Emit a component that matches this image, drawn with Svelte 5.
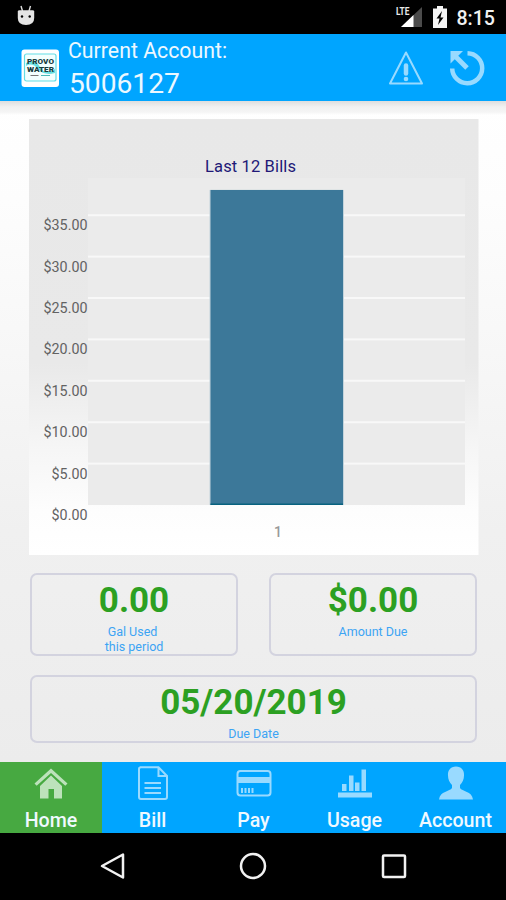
<script>
  const account = '5006127'

  // chart geometry, in panel coordinates
  const plot = { left: 59, right: 436, top: 59, bottom: 386 }
  const step = 41.4
  const ticks = [0, 5, 10, 15, 20, 25, 30, 35]
  const bills = [{ label: '1', x: 181.5, amount: 38.05 }]

  const barHeight = amount => (amount / 5) * step

  let active = 'Home'
  const tabs = ['Home', 'Bill', 'Pay', 'Usage', 'Account']
</script>

<div class="screen">
  <div class="status">
    <svg class="droid" width="18" height="21" viewBox="0 0 18 21">
      <path d="M4 1l1.5 5M13.5 1L12 6" stroke="#ddd" stroke-width="1.4" />
      <path d="M.8 6.5Q.8 5.2 2.5 5.2H15.500q1.700 0 1.700 1.300V13q0 7-8.200 7T.8 13z" fill="#e4e4e4" />
      <circle cx="5" cy="11.500" r="1.200" />
      <circle cx="12.700" cy="11.500" r="1.200" />
    </svg>
    <svg class="signal" width="28" height="28" viewBox="0 -3 28 28">
      <path d="M27 1v20H6z" fill="#4b4b4b" />
      <path d="M18.500 9V21H6z" fill="#fff" />
      <path d="M0 0h15v10.500H0z" fill="#000" />
      <text x="1" y="9" textLength="13.500" lengthAdjust="spacingAndGlyphs">LTE</text>
    </svg>
    <svg class="battery" width="14" height="22" viewBox="0 0 14 22">
      <path d="M4 0h6v2.500h4V22H0V2.500h4z" fill="#f4f4f4" />
      <path d="M9 5L3.500 12.500h3L5 19l5.500-7.500h-3z" fill="#000" />
    </svg>
    <span class="clock">8:15</span>
  </div>

  <header>
    <svg class="logo" width="38" height="38" viewBox="0 0 38 38">
      <rect x="0.500" y="0.500" width="37.500" height="37.500" rx="3" fill="#fff" />
      <rect x="3.500" y="5" width="31.500" height="27" rx="2" fill="#f3fffe" stroke="#62dde5" stroke-width="1.200" />
      <path d="M5 14q9-5 14 4t15 2v4q-11 3-17-4T5 17z" fill="#65dfe2" />
      <text x="6" y="14.500" textLength="27" lengthAdjust="spacingAndGlyphs">PROVO</text>
      <text x="6" y="22.800" textLength="27" lengthAdjust="spacingAndGlyphs">WATER</text>
      <path d="M9.500 26.500h8" stroke="#777" />
      <path d="M20 26.500h9" stroke="#49b9b8" />
    </svg>
    <div class="account">
      <span class="caption">Current Account:</span>
      <span class="number">{account}</span>
    </div>
    <svg class="alert" width="36" height="36" viewBox="0 0 36 36" fill="none" stroke="#99daff">
      <path d="M18 2.500L34 33.500H2z" stroke-width="2" stroke-linejoin="round" />
      <path d="M18 15.500v8" stroke-width="4.500" stroke-linecap="round" />
      <circle cx="18" cy="29" r="2.300" fill="#99daff" stroke="none" />
    </svg>
    <svg class="refresh" width="36" height="36" viewBox="0 0 36 36" fill="none" stroke="#99daff" stroke-width="4.500">
      <path d="M18.500 3.200A15 15 0 1 1 3.200 18.500" />
      <path d="M7 7L18 18" stroke-width="5" />
      <path d="M1.500 1H14L1.500 13.500z" fill="#99daff" stroke="none" />
    </svg>
  </header>

  <main>
    <svg class="chart" width="450" height="436" viewBox="0 0 450 436">
      <defs>
        <linearGradient id="panel" x1="0" y1="0" x2="0" y2="1">
          <stop offset="0" stop-color="#e8e8e8" />
          <stop offset="0.560" stop-color="#e9e9e9" />
          <stop offset="0.760" stop-color="#f6f6f6" />
          <stop offset="0.900" stop-color="#fdfdfd" />
          <stop offset="1" stop-color="#fff" />
        </linearGradient>
      </defs>
      <rect width="449.500" height="436" fill="url(#panel)" />
      <rect x={plot.left} y={plot.top} width={plot.right - plot.left} height={plot.bottom - plot.top} fill="#ebebeb" />
      <text class="title" x="221.500" y="53" textLength="91">Last 12 Bills</text>

      {#each ticks as tick, i}
        {#if i > 0}
          <rect x={plot.left} y={plot.bottom - i * step - 1} width={plot.right - plot.left} height="2" fill="#f8f8f8" />
        {/if}
        <text class="tick" x="58.500" y={plot.bottom - i * step + 15}>${tick}.00</text>
      {/each}

      {#each bills as bill}
        <rect x={bill.x - 1} y={plot.bottom - barHeight(bill.amount)} width="134.500" height={barHeight(bill.amount)} fill="#c4d4dc" />
        <rect x={bill.x} y={plot.bottom - barHeight(bill.amount)} width="132.500" height={barHeight(bill.amount)} fill="#3c7899" />
        <rect x={bill.x} y={plot.bottom - 1.5} width="132.500" height="1.500" fill="#08627f" />
        <text class="bill" x="249" y="418">{bill.label}</text>
      {/each}
    </svg>

    <div class="cards">
      <div class="card">
        <strong>0.00</strong>
        <span class="used">Gal Used<br />&nbsp;this period</span>
      </div>
      <div class="card">
        <strong>$0.00</strong>
        <span>Amount Due</span>
      </div>
      <div class="card wide">
        <strong>05/20/2019</strong>
        <span>Due Date</span>
      </div>
    </div>
  </main>

  <nav class="tabs">
    {#each tabs as tab}
      <button class:active={tab === active} on:click={() => (active = tab)}>
        <svg width="36" height="36" viewBox="0 0 36 36">
          {#if tab === 'Home'}
            <path d="M18 2.500L34.500 17.500l-2.200 2.200L18 7 3.700 19.700 1.500 17.500z" />
            <path d="M18 9.500L29 20v12.500H21V23h-5.500v9.500H7V20z" />
          {:else if tab === 'Bill'}
            <path class="line" d="M5 1.200h18.500L32 10v21q0 2-2 2H6q-2 0-2-2V3q0-1.800 2-1.800zM23.500 1.200V10H32" />
            <path class="line" d="M9.500 17h16.500M9.500 22h16.500M9.500 27h16.500" />
          {:else if tab === 'Pay'}
            <rect class="line" x="1.500" y="5" width="33" height="24.500" rx="3" />
            <path d="M1.500 11h33v6h-33z" />
            <path d="M5 22h2v5H5zM8.500 22h2v5h-2zM12 22h2v5h-2zM15.500 22h2v5h-2z" />
          {:else if tab === 'Usage'}
            <path d="M5 18h4.500V25H5zM12 9.500h4.500V25H12zM18 16.500h4.500V25H18zM24.500 3.500H29V25H24.500zM1 26.500h34v5H1z" />
          {:else}
            <path d="M18 .5c5.500 0 8.500 4 8 9 0 4-1.500 7-4 9.500v3c2 3.500 12 3 13 11.500H1C2 25 12 25.500 14 22v-3c-2.500-2.500-4-5.500-4-9.500-.5-5 2.500-9 8-9z" />
          {/if}
        </svg>
        <span>{tab}</span>
      </button>
    {/each}
  </nav>

  <div class="system">
    <svg width="28" height="30" viewBox="0 0 28 30"><path d="M24 3.500v23L3 15z" /></svg>
    <svg width="28" height="30" viewBox="0 0 28 30"><circle cx="14" cy="15" r="12" /></svg>
    <svg width="28" height="30" viewBox="0 0 28 30"><rect x="3" y="4.500" width="22" height="21.500" rx="1" /></svg>
  </div>
</div>

<style>
  :global(body) {
    margin: 0;
  }

  .screen {
    display: flex;
    flex-direction: column;
    width: 506px;
    height: 900px;
    overflow: hidden;
    font-family: Roboto, sans-serif;
    background: #000;
  }

  svg {
    display: block;
    flex: none;
  }

  .status {
    display: flex;
    align-items: center;
    box-sizing: border-box;
    height: 34px;
    padding: 0 11px 0 17px;
    color: #f1f1f1;
  }

  .droid {
    margin: 0 auto 3px 0;
  }

  .signal {
    margin-right: 10px;
  }

  .signal text {
    font-size: 10.5px;
    font-weight: 700;
    fill: #e8e8e8;
  }

  .battery {
    margin-right: 9px;
  }

  .clock {
    margin-top: 3px;
    font-size: 19.6px;
    line-height: 24px;
    font-weight: 500;
  }

  header {
    display: flex;
    align-items: center;
    box-sizing: border-box;
    height: 67px;
    padding: 0 21px 0 21px;
    background: #00a5ff;
    color: #ecf8ff;
  }

  .logo text {
    font-size: 7px;
    font-weight: 900;
    fill: #173c3d;
  }

  .account {
    display: flex;
    flex-direction: column;
    margin: 0 auto 0 9px;
  }

  .caption {
    font-size: 21.3px;
    line-height: 31px;
  }

  .number {
    padding-left: 1px;
    font-size: 28.2px;
    line-height: 35px;
  }

  .alert {
    margin-right: 25px;
  }

  main {
    box-sizing: border-box;
    height: 661px;
    padding: 18px 28px 0 29px;
    background:
      linear-gradient(#dedede, #f1f1f1 6px, #f5f5f5 11px, transparent 14px) no-repeat 0 0 / 100% 14px,
      linear-gradient(#fff, #fdfdfd 15%, #f0f0f0 65%, #ececec);
  }

  .title {
    font-size: 16.5px;
    text-anchor: middle;
    fill: #211877;
  }

  .tick {
    font-size: 14.3px;
    text-anchor: end;
    fill: #626262;
  }

  .bill {
    font-size: 14px;
    font-weight: 500;
    text-anchor: middle;
    fill: #999;
  }

  .cards {
    display: grid;
    grid-template-columns: 208px 208px;
    grid-template-rows: 83px 68px;
    gap: 19px 31px;
    margin: 18px 0 0 1px;
  }

  .card {
    display: flex;
    flex-direction: column;
    align-items: center;
    box-sizing: border-box;
    border: 2px solid #d3d3df;
    border-radius: 7px;
    text-align: center;
    color: #3ca4f4;
    font-size: 12.5px;
    line-height: 15px;
  }

  .card strong {
    margin-top: 2px;
    font-size: 35px;
    line-height: 47px;
    font-weight: 700;
    color: #2ca022;
  }

  .used {
    margin-right: 3px;
  }

  .wide {
    grid-column: 1 / 3;
  }

  .tabs {
    display: grid;
    grid-template-columns: 102px repeat(4, 101px);
    height: 71px;
  }

  .tabs button {
    display: flex;
    flex-direction: column;
    align-items: center;
    margin: 0;
    padding: 4px 0 0;
    border: 0;
    background: #00a5ff;
    color: #f0f9ff;
    font: 500 19.6px/24px Roboto, sans-serif;
  }

  .tabs button.active {
    background: #47a941;
  }

  .tabs span {
    margin-top: 7px;
  }

  .tabs svg {
    fill: #99daff;
  }

  .tabs .active svg {
    fill: #bde2bb;
  }

  .tabs .line {
    fill: none;
    stroke: #99daff;
    stroke-width: 2;
  }

  .system {
    display: flex;
    justify-content: center;
    gap: 112.5px;
    padding-top: 18px;
    background: #000;
  }

  .system svg {
    fill: none;
    stroke: #f2f2f2;
    stroke-width: 2.5;
    stroke-linejoin: round;
  }
</style>
